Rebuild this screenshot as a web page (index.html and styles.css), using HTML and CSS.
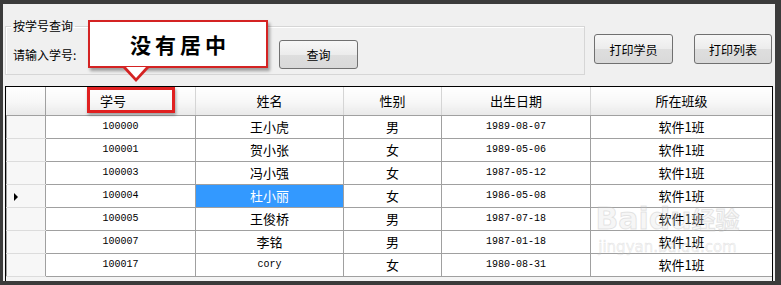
FILE: index.html
```html
<!DOCTYPE html>
<html>
<head>
  <meta charset="utf-8">
  <title>学员查询</title>
  <link rel="stylesheet" href="styles.css">
</head>
<body>

  <div class="window">
    <div class="toolbar">
      <fieldset class="search-box">
        <legend>按学号查询</legend>
        <div class="search-row">
          <label>请输入学号:</label>
          <input type="text" class="id-input">
          <button class="btn btn-query">查询</button>
        </div>
      </fieldset>
      <button class="btn btn-print">打印学员</button>
      <button class="btn btn-list">打印列表</button>
    </div>

    <div class="grid">
      <table id="students">
        <colgroup>
          <col class="c-head"><col class="c-id"><col class="c-name"><col class="c-sex"><col class="c-date"><col class="c-class">
        </colgroup>
        <thead>
          <tr>
            <th class="corner"></th>
            <th class="left">学号</th>
            <th>姓名</th>
            <th>性别</th>
            <th>出生日期</th>
            <th>所在班级</th>
          </tr>
        </thead>
        <tbody></tbody>
      </table>
    </div>

    <!-- annotations drawn over the screenshot -->
    <div class="callout">没有居中</div>
    <div class="mark-box"></div>
    <div class="watermark">
      <div class="wm-logo">Baidu<span>经验</span></div>
      <div class="wm-url">jingyan.baidu.com</div>
    </div>
  </div>

  <script>
    const students = [
      ['100000', '王小虎', '男', '1989-08-07', '软件1班'],
      ['100001', '贺小张', '女', '1989-05-06', '软件1班'],
      ['100003', '冯小强', '女', '1987-05-12', '软件1班'],
      ['100004', '杜小丽', '女', '1986-05-08', '软件1班'],
      ['100005', '王俊桥', '男', '1987-07-18', '软件1班'],
      ['100007', '李铭', '男', '1987-01-18', '软件1班'],
      ['100017', 'cory', '女', '1980-08-31', '软件1班']
    ];

    const tbody = document.querySelector('#students tbody');
    students.forEach((s, i) => {
      const row = tbody.insertRow();
      const head = row.insertCell();
      head.className = 'row-head';
      if (i === 3) {
        head.innerHTML = '<span class="current"></span>';
      }
      s.forEach((value, j) => {
        const cell = row.insertCell();
        cell.textContent = value;
        if (j === 0 || j === 3 || /^[a-z]+$/.test(value)) cell.className = 'mono';
        if (i === 3 && j === 1) cell.classList.add('selected');
      });
    });
  </script>
</body>
</html>
```

FILE: styles.css
```css
* {
  box-sizing: border-box;
}

body {
  margin: 0;
  background: #3b3b3b;
  font-family: "Noto Sans CJK SC", sans-serif;
  font-size: 12px;
  color: #000;
}

.window {
  position: relative;
  margin: 4px 6px 0 3px;
  height: 277px;
  background: #f0f0f0;
  overflow: hidden;
}

/* top area */
.toolbar {
  display: flex;
  align-items: flex-start;
  height: 82px;
  padding: 14px 0 0 2px;
}

.search-box {
  margin: 0;
  padding: 0 0 0 5px;
  width: 580px;
  height: 57px;
  border: 1px solid #d6d6d6;
  box-shadow: inset 1px 1px 0 #fff;
}

.search-box legend {
  padding: 0 2px;
  line-height: 16px;
  font-size: 12px;
}

.search-row {
  display: flex;
  align-items: center;
  margin: 6px 0 0 2px;
}

.search-row label {
  width: 65px;
}

.id-input {
  margin-left: 12px;
  width: 170px;
  height: 21px;
  border: 1px solid #abadb3;
}

.btn {
  height: 30px;
  border: 1px solid #707070;
  border-radius: 3px;
  background: linear-gradient(#f7f7f7, #ececec 50%, #dedede 51%, #d9d9d9);
  font-family: "Noto Sans CJK SC", sans-serif;
  font-size: 12px;
  color: #000;
  padding: 0;
}

.btn-query {
  margin-left: 19px;
  width: 79px;
  height: 29px;
}

.btn-print {
  margin: 16px 0 0 9px;
  width: 79px;
}

.btn-list {
  margin: 16px 0 0 21px;
  width: 78px;
}

/* data grid */
.grid {
  margin: 0 2px;
  width: 768px;
  height: 205px;
  border: 1px solid #000;
  background: #f4f4f4;
  overflow: hidden;
}

table {
  border-collapse: collapse;
  table-layout: fixed;
  width: 766px;
}

.c-head { width: 39px; }
.c-id { width: 150px; }
.c-name { width: 148px; }
.c-sex { width: 98px; }
.c-date { width: 149px; }
.c-class { width: 182px; }

thead tr {
  height: 28px;
}

th {
  font-weight: normal;
  font-size: 13px;
  text-align: center;
  padding: 0;
  border-right: 1px solid #d5d5d5;
  border-bottom: 1px solid #a0a0a0;
  background: linear-gradient(#ffffff, #f7f7f7 55%, #e9e9e9);
}

th.left {
  text-align: left;
  padding-left: 54px;
}

th.corner {
  border-right: 1px solid #a0a0a0;
}

tbody tr {
  height: 23px;
}

td {
  padding: 0;
  text-align: center;
  font-size: 13px;
  background: #fff;
  border: 1px solid #a0a0a0;
  white-space: nowrap;
}

td.mono {
  font-family: "Liberation Mono", monospace;
  font-size: 10px;
}

td.row-head {
  text-align: left;
  padding-left: 7px;
  background: #f7f7f7;
  border-top-color: #dcdcdc;
  border-bottom-color: #dcdcdc;
}

td.selected {
  background: #3399ff;
  color: #fff;
}

.current {
  display: inline-block;
  width: 0;
  height: 0;
  border-left: 4px solid #000;
  border-top: 4px solid transparent;
  border-bottom: 4px solid transparent;
  vertical-align: middle;
}

/* annotation callout over the screenshot */
.callout {
  position: absolute;
  left: 85px;
  top: 16px;
  width: 180px;
  height: 48px;
  border: 2px solid #d42323;
  background: #fff;
  box-shadow: 2px 3px 3px rgba(0, 0, 0, 0.35);
  font-family: "Noto Sans CJK SC", sans-serif;
  font-weight: bold;
  font-size: 21px;
  letter-spacing: 4px;
  text-indent: 4px;
  text-align: center;
  line-height: 44px;
}

.callout::before,
.callout::after {
  content: "";
  position: absolute;
  width: 0;
  height: 0;
}

.callout::before {
  left: 33px;
  top: 46px;
  border-left: 13px solid transparent;
  border-right: 13px solid transparent;
  border-top: 14px solid #d42323;
}

.callout::after {
  left: 36px;
  top: 45px;
  border-left: 10px solid transparent;
  border-right: 10px solid transparent;
  border-top: 11px solid #fff;
}

.mark-box {
  position: absolute;
  left: 84px;
  top: 83px;
  width: 88px;
  height: 26px;
  border: 3px solid #e02020;
  box-shadow: 1px 2px 3px rgba(0, 0, 0, 0.35);
}

.watermark {
  position: absolute;
  left: 592px;
  top: 196px;
  width: 145px;
  color: rgba(210, 210, 210, 0.2);
  font-family: "DejaVu Sans", sans-serif;
  text-align: center;
  pointer-events: none;
}

.wm-logo {
  font-size: 30px;
  font-weight: bold;
  line-height: 38px;
  -webkit-text-stroke: 1px rgba(185, 185, 185, 0.35);
}

.wm-logo span {
  font-family: "Noto Sans CJK SC", sans-serif;
  font-size: 24px;
}

.wm-url {
  font-size: 15px;
  line-height: 18px;
  -webkit-text-stroke: 0.5px rgba(185, 185, 185, 0.35);
}
```
